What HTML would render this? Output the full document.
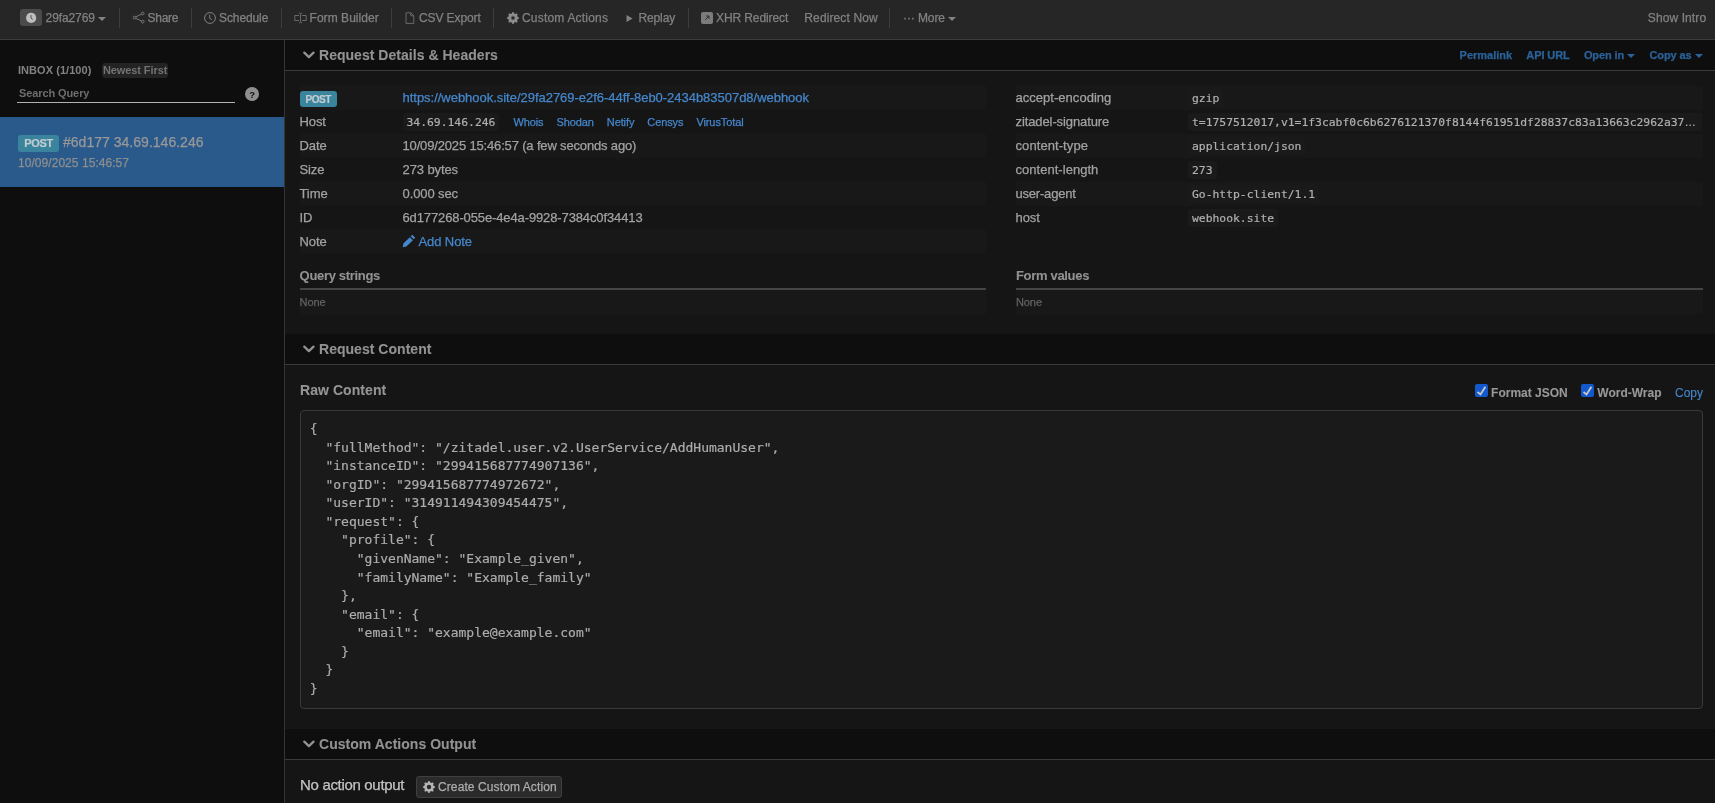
<!DOCTYPE html>
<html lang="en">
<head>
<meta charset="utf-8">
<title>Webhook.site</title>
<style>
*{box-sizing:border-box}
html,body{margin:0;padding:0}
body{width:1715px;height:803px;overflow:hidden;background:#151515;color:#a2a2a2;
  font-family:"Liberation Sans",Arial,sans-serif;font-size:13px;line-height:18.57px;position:relative;letter-spacing:-0.1px;-webkit-text-stroke-width:0.25px}
a{color:#4587cc;text-decoration:none}
.abs{position:absolute}
/* NAVBAR */
#nav{position:absolute;left:0;top:0;width:1715px;height:40px;background:#262626;border-bottom:1px solid #3b3b3b}
#nav .it{position:absolute;top:0;height:39px;line-height:36px;font-size:12px;color:#828282;white-space:nowrap}
#nav .dv{position:absolute;top:8px;width:1px;height:20px;background:#3d3d3d}
#nav svg{position:absolute}
.caret{display:inline-block;width:0;height:0;border-left:4px solid transparent;border-right:4px solid transparent;border-top:4px solid currentColor;vertical-align:middle}
.hl{position:absolute;top:0;line-height:30px;font-size:11px;font-weight:bold;color:#2b6299;white-space:nowrap}
.hc{position:absolute;top:14px;width:0;height:0;border-left:4px solid transparent;border-right:4px solid transparent;border-top:4px solid #2b6299}
/* SIDEBAR */
#side{position:absolute;left:0;top:40px;width:285px;height:763px;background:#0e0e0e;border-right:1px solid #353535}
/* MAIN */
#main{position:absolute;left:285px;top:40px;width:1430px;height:763px;background:#151515}
.sh{position:absolute;left:0;width:1430px;height:31px;background:#0e0e0e;border-bottom:1px solid #3a3a3a}
.sh .t{position:absolute;left:34px;top:0;line-height:30px;font-size:14px;font-weight:bold;color:#929292;white-space:nowrap;letter-spacing:0.03px;-webkit-text-stroke-width:0.1px}
.sh svg{position:absolute;left:18px;top:10px}
.row{position:absolute;height:24px;line-height:24px;white-space:nowrap;text-indent:-0.5px}
.row.o{background:#181818}
.row .v{position:absolute;left:103px;top:0}
.row .v2{position:absolute;left:176px;top:0;text-indent:0}
code{letter-spacing:0;font-family:"DejaVu Sans Mono","Liberation Mono",monospace;font-size:11.375px;color:#b0b0b0;background:#1a1a1a;-webkit-text-stroke-width:0.2px;border-radius:3px;padding:2px 4px}
.lbl{display:inline-block;background:#3a849d;color:#c2cdd1;-webkit-text-stroke-width:0.2px;font-weight:bold;border-radius:3px;text-align:center}
.cb{display:inline-block;width:13px;height:13px;background:#1159cc;border-radius:2px;vertical-align:0px;margin-right:3px;position:relative}
.cb svg{position:absolute;left:0;top:0}
pre{margin:0;letter-spacing:0;font-family:"DejaVu Sans Mono","Liberation Mono",monospace;font-size:13px;line-height:18.57px;color:#acacac;-webkit-text-stroke-width:0.2px}
</style>
</head>
<body>
<div id="wrap" style="will-change:transform;position:absolute;left:0;top:0;width:1715px;height:803px">
<div id="nav">
  <div class="abs" style="left:20px;top:9px;width:22px;height:17px;background:#4b4b4b;border-radius:3px"></div>
  <svg style="left:26px;top:12px" width="11" height="12" viewBox="0 0 11 12"><circle cx="5.150" cy="5.900" r="5.100" fill="#bebebe"/><path d="M5 3.100v3l1.700 1.300" stroke="#4b4b4b" stroke-width="0.900" fill="none"/></svg>
  <div class="it" style="left:45.600px">29fa2769 <span class="caret"></span></div>
  <div class="dv" style="left:119px"></div>
  <svg style="left:131.600px;top:11.400px" width="13" height="13" viewBox="0 0 13 13" fill="none" stroke="#808080" stroke-width="0.900"><circle cx="10.700" cy="2.500" r="1.350"/><circle cx="2.500" cy="6.600" r="1.350"/><circle cx="10.700" cy="10.650" r="1.350"/><path d="M3.700 5.950l5.800-2.800M3.700 7.250l5.800 2.800"/></svg>
  <div class="it" style="left:147.500px;letter-spacing:-0.25px">Share</div>
  <div class="dv" style="left:191px"></div>
  <svg style="left:204px;top:12px" width="12" height="12" viewBox="0 0 12 12" fill="none" stroke="#808080" stroke-width="1"><circle cx="6" cy="6" r="5.4"/><path d="M5.7 2.8v3.5l2.2 1.4"/></svg>
  <div class="it" style="left:219px">Schedule</div>
  <div class="dv" style="left:281px"></div>
  <svg style="left:294px;top:12px" width="13" height="12" viewBox="0 0 13 12" fill="none" stroke="#727272" stroke-width="0.900" stroke-linejoin="round"><path d="M5 3.5H.8v5H5M8 3.5h4.2v5H8M5 1.2c1 0 1.5.4 1.5 1.2v7.2c0 .8-.5 1.2-1.5 1.2M8 1.2c-1 0-1.5.4-1.5 1.2M8 10.800c-1 0-1.500-.4-1.500-1.200"/></svg>
  <div class="it" style="left:309.500px;letter-spacing:0.05px">Form Builder</div>
  <div class="dv" style="left:391px"></div>
  <svg style="left:404.800px;top:11.500px" width="10" height="13" viewBox="0 0 10 13" fill="none" stroke="#727272" stroke-width="0.900" stroke-linejoin="round"><path d="M1 .8h4.800l3 3v7.600H1zM5.800 .8v3h3"/></svg>
  <div class="it" style="left:419px">CSV Export</div>
  <div class="dv" style="left:493px"></div>
  <svg style="left:506.800px;top:12px" width="12" height="12" viewBox="0 0 16 16" fill="#8c8c8c"><circle cx="8" cy="8" r="2.700" fill="none" stroke="#8c8c8c" stroke-width="1"/><path d="M9.405 1.050c-.413-1.400-2.397-1.400-2.810 0l-.100.340a1.464 1.464 0 0 1-2.105.872l-.310-.170c-1.283-.698-2.686.705-1.987 1.987l.169.311c.446.820.023 1.841-.872 2.105l-.340.100c-1.400.413-1.400 2.397 0 2.810l.340.100a1.464 1.464 0 0 1 .872 2.105l-.170.310c-.698 1.283.705 2.686 1.987 1.987l.311-.169a1.464 1.464 0 0 1 2.105.872l.100.340c.413 1.400 2.397 1.400 2.810 0l.100-.340a1.464 1.464 0 0 1 2.105-.872l.310.170c1.283.698 2.686-.705 1.987-1.987l-.169-.311a1.464 1.464 0 0 1 .872-2.105l.340-.100c1.400-.413 1.400-2.397 0-2.810l-.340-.100a1.464 1.464 0 0 1-.872-2.105l.170-.310c.698-1.283-.705-2.686-1.987-1.987l-.311.169a1.464 1.464 0 0 1-2.105-.872zM8 10.930a2.929 2.929 0 1 1 0-5.860 2.929 2.929 0 0 1 0 5.858z"/></svg>
  <div class="it" style="left:522px;letter-spacing:0.2px">Custom Actions</div>
  <svg style="left:626px;top:14px" width="8" height="9" viewBox="0 0 8 9"><path d="M.5 1.100l6.100 3.400L.5 7.900z" fill="#808080"/></svg>
  <div class="it" style="left:638.400px">Replay</div>
  <div class="dv" style="left:688px"></div>
  <svg style="left:701px;top:12px" width="12" height="12" viewBox="0 0 12 12"><rect x="0" y="0" width="12" height="12" rx="2" fill="#7c7c7c"/><path d="M4.200 7.800l3.600-3.600M5 4h3v3" stroke="#262626" stroke-width="0.900" fill="none"/></svg>
  <div class="it" style="left:716px">XHR Redirect</div>
  <div class="it" style="left:804.300px;letter-spacing:0.12px">Redirect Now</div>
  <div class="dv" style="left:889px"></div>
  <div class="it" style="left:903px">&#183;&#183;&#183; More <span class="caret"></span></div>
  <div class="it" style="left:1647.800px;letter-spacing:0.1px">Show Intro</div>
</div>

<div id="side">
  <div class="abs" style="left:18px;top:21px;font-size:11px;font-weight:bold;color:#828282;line-height:18px;white-space:nowrap;letter-spacing:0.05px;-webkit-text-stroke-width:0">INBOX (1/100)</div>
  <div class="abs" style="left:101.700px;top:23.300px;width:66.700px;height:14.400px;background:#232323;border-radius:3px"></div>
  <div class="abs" style="left:103px;top:21px;font-size:11px;font-weight:bold;color:#737373;line-height:18px;white-space:nowrap;-webkit-text-stroke-width:0">Newest First</div>
  <div class="abs" style="left:19px;top:44px;font-size:11px;font-weight:bold;color:#6e6e6e;line-height:18px;white-space:nowrap;-webkit-text-stroke-width:0">Search Query</div>
  <div class="abs" style="left:17px;top:62px;width:218px;height:1px;background:#b2b2b2"></div>
  <div class="abs" style="left:245px;top:47px;width:14px;height:14px;border-radius:7px;background:#8f8f8f;color:#0e0e0e;font-size:9.500px;font-weight:bold;line-height:15px;text-align:center;-webkit-text-stroke-width:0">?</div>
  <div class="abs" style="left:0;top:77px;width:284px;height:70px;background:#2a5a8b"></div>
  <div class="abs lbl" style="left:18px;top:95px;width:41px;height:17px;font-size:11px;line-height:17px;letter-spacing:-0.3px">POST</div>
  <div class="abs" style="left:63px;top:93px;font-size:14px;color:#989898;line-height:18px;white-space:nowrap;letter-spacing:0.02px">#6d177 34.69.146.246</div>
  <div class="abs" style="left:18px;top:114px;font-size:12px;color:#8e8e8e;line-height:18px;white-space:nowrap;letter-spacing:0.05px">10/09/2025 15:46:57</div>
</div>

<div id="main">
  <!-- Section 1 -->
  <div class="sh" style="top:0">
    <svg width="12" height="10" viewBox="0 0 12 10"><path d="M1.300 2.600L5.900 7.100L10.500 2.600" stroke="#929292" stroke-width="2.300" fill="none" stroke-linecap="round" stroke-linejoin="round"/></svg>
    <div class="t">Request Details &amp; Headers</div>
    <div class="hl" style="left:1174.600px;letter-spacing:0">Permalink</div><div class="hl" style="left:1241.300px">API URL</div><div class="hl" style="left:1298.900px">Open in</div><div class="hc" style="left:1342.300px"></div><div class="hl" style="left:1364.500px">Copy as</div><div class="hc" style="left:1410px"></div>
  </div>

  <!-- left table -->
  <div class="row o" style="left:15px;top:46px;width:686px"><span class="lbl abs" style="left:0;top:5px;width:37px;height:16px;font-size:10px;line-height:17px;letter-spacing:-0.4px">POST</span><span class="v" style="letter-spacing:-0.025px"><a>https://webhook.site/29fa2769-e2f6-44ff-8eb0-2434b83507d8/webhook</a></span></div>
  <div class="row" style="left:15px;top:70px;width:686px">Host<span class="v"><code>34.69.146.246</code><a style="font-size:11px;margin-left:14px">Whois</a><a style="font-size:11px;margin-left:13px">Shodan</a><a style="font-size:11px;margin-left:13px">Netify</a><a style="font-size:11px;margin-left:13px">Censys</a><a style="font-size:11px;margin-left:13px">VirusTotal</a></span></div>
  <div class="row o" style="left:15px;top:94px;width:686px">Date<span class="v" style="letter-spacing:-0.16px">10/09/2025 15:46:57 (a few seconds ago)</span></div>
  <div class="row" style="left:15px;top:118px;width:686px">Size<span class="v">273 bytes</span></div>
  <div class="row o" style="left:15px;top:142px;width:686px">Time<span class="v">0.000 sec</span></div>
  <div class="row" style="left:15px;top:166px;width:686px">ID<span class="v" style="letter-spacing:-0.12px">6d177268-055e-4e4a-9928-7384c0f34413</span></div>
  <div class="row o" style="left:15px;top:190px;width:686px">Note<span class="v"><a><svg width="14" height="14" viewBox="0 0 12 12" style="vertical-align:-2px;margin-right:3px;margin-left:-1px"><path d="M8.800.6l2.600 2.600-1.400 1.400-2.600-2.600zM6.700 2.700l2.600 2.600-5.500 5.500L.6 11.400l.6-3.200z" fill="#4587cc"/></svg>Add Note</a></span></div>

  <!-- right table -->
  <div class="row o" style="left:731px;top:46px;width:687px"><span style="letter-spacing:0.03px">accept-encoding</span><span class="v2"><code style="margin-left:-4px">gzip</code></span></div>
  <div class="row" style="left:731px;top:70px;width:687px">zitadel-signature<span class="v2"><code style="margin-left:-4px;padding-right:6.600px;border-radius:3px 0 0 3px">t=1757512017,v1=1f3cabf0c6b6276121370f8144f61951df28837c83a13663c2962a37<span style="font-family:'Liberation Sans',sans-serif">&#8230;</span></code></span></div>
  <div class="row o" style="left:731px;top:94px;width:687px"><span style="letter-spacing:0.08px">content-type</span><span class="v2"><code style="margin-left:-4px">application/json</code></span></div>
  <div class="row" style="left:731px;top:118px;width:687px"><span style="letter-spacing:0.03px">content-length</span><span class="v2"><code style="margin-left:-4px">273</code></span></div>
  <div class="row o" style="left:731px;top:142px;width:687px"><span style="letter-spacing:-0.2px">user-agent</span><span class="v2"><code style="margin-left:-4px">Go-http-client/1.1</code></span></div>
  <div class="row" style="left:731px;top:166px;width:687px">host<span class="v2"><code style="margin-left:-4px">webhook.site</code></span></div>

  <!-- query strings / form values -->
  <div class="abs" style="left:14.600px;top:226px;font-weight:bold;color:#929292;line-height:20px;white-space:nowrap;letter-spacing:-0.32px;-webkit-text-stroke-width:0.1px">Query strings</div>
  <div class="abs" style="left:15px;top:248px;width:686px;height:2px;background:#444"></div>
  <div class="abs" style="left:15px;top:250px;width:686px;height:24px;background:#181818"></div>
  <div class="abs" style="left:14.600px;top:253px;font-size:11px;color:#626262;line-height:18px">None</div>
  <div class="abs" style="left:731px;top:226px;font-weight:bold;color:#929292;line-height:20px;white-space:nowrap;letter-spacing:-0.32px;-webkit-text-stroke-width:0.1px">Form values</div>
  <div class="abs" style="left:731px;top:248px;width:687px;height:2px;background:#444"></div>
  <div class="abs" style="left:731px;top:250px;width:687px;height:24px;background:#181818"></div>
  <div class="abs" style="left:731px;top:253px;font-size:11px;color:#626262;line-height:18px">None</div>

  <!-- Section 2 -->
  <div class="sh" style="top:294px">
    <svg width="12" height="10" viewBox="0 0 12 10"><path d="M1.300 2.600L5.900 7.100L10.500 2.600" stroke="#929292" stroke-width="2.300" fill="none" stroke-linecap="round" stroke-linejoin="round"/></svg>
    <div class="t">Request Content</div>
  </div>
  <div class="abs" style="left:15px;top:340px;font-size:14px;font-weight:bold;color:#959595;line-height:20px;white-space:nowrap;letter-spacing:0.06px;-webkit-text-stroke-width:0.1px">Raw Content</div>
  <div class="abs" style="right:12px;top:343px;line-height:20px;font-size:12px;font-weight:bold;color:#989898;white-space:nowrap;letter-spacing:0;-webkit-text-stroke-width:0.1px">
    <span class="cb"><svg width="13" height="13" viewBox="0 0 13 13"><path d="M2.500 8.100l3 2.300 4.900-7.600" stroke="#c6c6c6" stroke-width="1.900" fill="none"/></svg></span>Format JSON<span class="cb" style="margin-left:13.5px"><svg width="13" height="13" viewBox="0 0 13 13"><path d="M2.500 8.100l3 2.300 4.900-7.600" stroke="#c6c6c6" stroke-width="1.900" fill="none"/></svg></span>Word-Wrap<a style="font-weight:normal;margin-left:13.5px">Copy</a>
  </div>
  <div class="abs" style="left:15px;top:370px;width:1403px;height:299px;border:1px solid #393939;border-radius:4px;background:#1a1a1a;padding:9px 8.800px">
<pre>{
  "fullMethod": "/zitadel.user.v2.UserService/AddHumanUser",
  "instanceID": "299415687774907136",
  "orgID": "299415687774972672",
  "userID": "314911494309454475",
  "request": {
    "profile": {
      "givenName": "Example_given",
      "familyName": "Example_family"
    },
    "email": {
      "email": "example@example.com"
    }
  }
}</pre>
  </div>

  <!-- Section 3 -->
  <div class="sh" style="top:689px">
    <svg width="12" height="10" viewBox="0 0 12 10"><path d="M1.300 2.600L5.900 7.100L10.500 2.600" stroke="#929292" stroke-width="2.300" fill="none" stroke-linecap="round" stroke-linejoin="round"/></svg>
    <div class="t">Custom Actions Output</div>
  </div>
  <div class="abs" style="left:15px;top:735px;font-size:15px;color:#c4c4c4;line-height:20px;white-space:nowrap;letter-spacing:-0.32px">No action output</div>
  <div class="abs" style="left:131px;top:736px;width:146px;height:22px;border:1px solid #3f3f3f;border-radius:3px;background:#2b2b2b"></div>
  <svg class="abs" style="left:138px;top:741px" width="12" height="12" viewBox="0 0 16 16" fill="#b5b5b5"><path d="M9.405 1.050c-.413-1.400-2.397-1.400-2.810 0l-.100.340a1.464 1.464 0 0 1-2.105.872l-.310-.170c-1.283-.698-2.686.705-1.987 1.987l.169.311c.446.820.023 1.841-.872 2.105l-.340.100c-1.400.413-1.400 2.397 0 2.810l.340.100a1.464 1.464 0 0 1 .872 2.105l-.170.310c-.698 1.283.705 2.686 1.987 1.987l.311-.169a1.464 1.464 0 0 1 2.105.872l.100.340c.413 1.400 2.397 1.400 2.810 0l.100-.340a1.464 1.464 0 0 1 2.105-.872l.310.170c1.283.698 2.686-.705 1.987-1.987l-.169-.311a1.464 1.464 0 0 1 .872-2.105l.340-.100c1.400-.413 1.400-2.397 0-2.810l-.340-.100a1.464 1.464 0 0 1-.872-2.105l.170-.310c.698-1.283-.705-2.686-1.987-1.987l-.311.169a1.464 1.464 0 0 1-2.105-.872zM8 10.930a2.929 2.929 0 1 1 0-5.860 2.929 2.929 0 0 1 0 5.858z"/></svg>
  <div class="abs" style="left:153px;top:737px;font-size:12px;color:#acacac;line-height:20px;white-space:nowrap;letter-spacing:0.1px">Create Custom Action</div>
</div>
</div>
</body>
</html>
